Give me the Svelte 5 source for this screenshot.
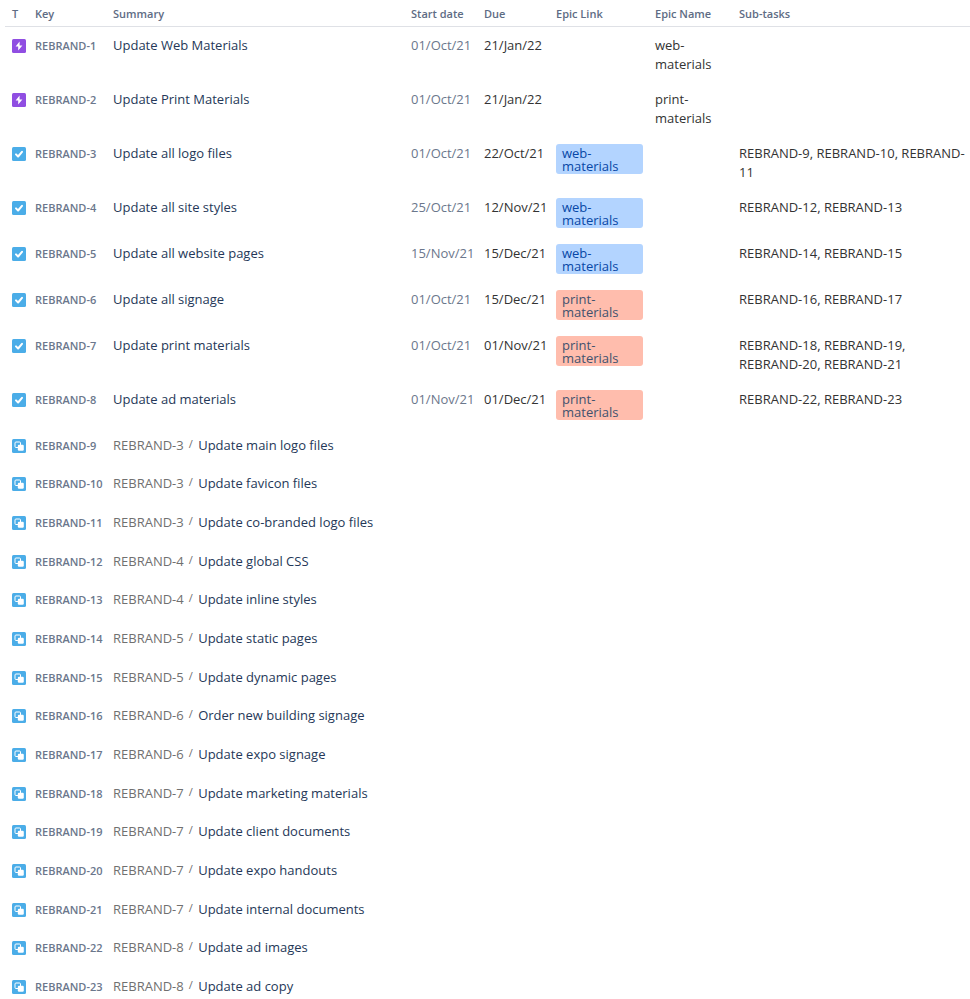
<script>
  const columns = [
    { id: "type", label: "T" },
    { id: "key", label: "Key" },
    { id: "summary", label: "Summary" },
    { id: "start", label: "Start date" },
    { id: "due", label: "Due" },
    { id: "epic-link", label: "Epic Link" },
    { id: "epic-name", label: "Epic Name" },
    { id: "subtasks", label: "Sub-tasks" },
  ];

  const issues = [
    { n: 1, type: "epic", summary: "Update Web Materials", start: "01/Oct/21", due: "21/Jan/22", epicName: "web-materials" },
    { n: 2, type: "epic", summary: "Update Print Materials", start: "01/Oct/21", due: "21/Jan/22", epicName: "print-materials" },
    { n: 3, type: "task", summary: "Update all logo files", start: "01/Oct/21", due: "22/Oct/21", epic: "web", subtasks: [9, 10, 11] },
    { n: 4, type: "task", summary: "Update all site styles", start: "25/Oct/21", due: "12/Nov/21", epic: "web", subtasks: [12, 13] },
    { n: 5, type: "task", summary: "Update all website pages", start: "15/Nov/21", due: "15/Dec/21", epic: "web", subtasks: [14, 15] },
    { n: 6, type: "task", summary: "Update all signage", start: "01/Oct/21", due: "15/Dec/21", epic: "print", subtasks: [16, 17] },
    { n: 7, type: "task", summary: "Update print materials", start: "01/Oct/21", due: "01/Nov/21", epic: "print", subtasks: [18, 19, 20, 21] },
    { n: 8, type: "task", summary: "Update ad materials", start: "01/Nov/21", due: "01/Dec/21", epic: "print", subtasks: [22, 23] },
    { n: 9, type: "subtask", parent: 3, summary: "Update main logo files" },
    { n: 10, type: "subtask", parent: 3, summary: "Update favicon files" },
    { n: 11, type: "subtask", parent: 3, summary: "Update co-branded logo files" },
    { n: 12, type: "subtask", parent: 4, summary: "Update global CSS" },
    { n: 13, type: "subtask", parent: 4, summary: "Update inline styles" },
    { n: 14, type: "subtask", parent: 5, summary: "Update static pages" },
    { n: 15, type: "subtask", parent: 5, summary: "Update dynamic pages" },
    { n: 16, type: "subtask", parent: 6, summary: "Order new building signage" },
    { n: 17, type: "subtask", parent: 6, summary: "Update expo signage" },
    { n: 18, type: "subtask", parent: 7, summary: "Update marketing materials" },
    { n: 19, type: "subtask", parent: 7, summary: "Update client documents" },
    { n: 20, type: "subtask", parent: 7, summary: "Update expo handouts" },
    { n: 21, type: "subtask", parent: 7, summary: "Update internal documents" },
    { n: 22, type: "subtask", parent: 8, summary: "Update ad images" },
    { n: 23, type: "subtask", parent: 8, summary: "Update ad copy" },
  ];

  const key = (n) => `REBRAND-${n}`;
</script>

<table class="issues">
  <colgroup>
    {#each columns as col}
      <col class="col-{col.id}" />
    {/each}
  </colgroup>
  <thead>
    <tr>
      {#each columns as col}
        <th scope="col">{col.label}</th>
      {/each}
    </tr>
  </thead>
  <tbody>
    {#each issues as issue (issue.n)}
      <tr class={issue.type}>
        <td>
          <svg class="icon" viewBox="0 0 16 16" role="img" aria-label={issue.type}>
            {#if issue.type === "epic"}
              <rect x="1" y="1" width="14" height="14" rx="1.5" fill="#904ee2" />
              <path d="M8.6 3.4 4.6 8.5H7.2V12.6L11.4 7.5H8.6Z" fill="#fff" />
            {:else if issue.type === "task"}
              <rect x="1" y="1" width="14" height="14" rx="1.5" fill="#4bade8" />
              <path d="M5 8.4 7.1 10.5 11 5.8" fill="none" stroke="#fff" stroke-width="2" stroke-linecap="round" stroke-linejoin="round" />
            {:else}
              <rect x="1" y="1" width="14" height="14" rx="1.5" fill="#4bade8" />
              <rect x="4" y="4" width="5.5" height="5.5" rx="1" fill="none" stroke="#fff" />
              <rect x="6.8" y="6.8" width="6" height="6" rx="1.2" fill="#fff" />
            {/if}
          </svg>
        </td>
        <td><a class="key" href="#{key(issue.n)}">{key(issue.n)}</a></td>
        <td>
          {#if issue.parent}
            <a class="parent" href="#{key(issue.parent)}">{key(issue.parent)}</a><span class="slash">/</span>
          {/if}
          <a class="summary" href="#{key(issue.n)}">{issue.summary}</a>
        </td>
        <td class="start">{issue.start ?? ""}</td>
        <td class="due">{issue.due ?? ""}</td>
        <td>
          {#if issue.epic}
            <a class="epic-label {issue.epic}" href="#{issue.epic}">{issue.epic}-materials</a>
          {/if}
        </td>
        <td>{issue.epicName ?? ""}</td>
        <td>{(issue.subtasks ?? []).map(key).join(", ")}</td>
      </tr>
    {/each}
  </tbody>
</table>

<style>
  :global(body) {
    margin: 0;
    background: #fff;
    overflow-x: hidden;
  }
  :global(#app) {
    padding-left: 5px;
  }
  .issues {
    width: 100%;
    table-layout: fixed;
    border-collapse: collapse;
    font-family: "Segoe UI", "Open Sans", "Noto Sans", sans-serif;
    font-size: 13px;
    line-height: 19px;
    color: #333;
  }
  .col-type {
    width: 26px;
  }
  .col-key {
    width: 78px;
  }
  .col-start {
    width: 73px;
  }
  .col-due {
    width: 72px;
  }
  .col-epic-link {
    width: 99px;
  }
  .col-epic-name {
    width: 84px;
  }
  .col-subtasks {
    width: 235px;
  }
  th {
    padding: 4px 0 3px 4px;
    border-bottom: 1px solid #dfe1e6;
    font-size: 11px;
    font-weight: 600;
    text-align: left;
    white-space: nowrap;
    color: #5e6c84;
  }
  td {
    padding: 9px 0 7px 4px;
    vertical-align: top;
  }
  th:first-child {
    padding-left: 7px;
  }
  td:first-child {
    padding-left: 6px;
  }
  .subtask td {
    height: 23px;
  }
  .subtask:nth-child(3n) td {
    height: 22px;
  }
  a {
    text-decoration: none;
  }
  .icon {
    display: block;
    width: 16px;
    height: 16px;
    margin-top: 2px;
  }
  .key {
    font-size: 11px;
    font-weight: 600;
    white-space: nowrap;
    color: #6b778c;
  }
  .summary {
    color: #253858;
  }
  .parent {
    color: #707070;
  }
  .slash {
    margin: 0 2px 0 5px;
    font-size: 11px;
    line-height: 11px;
    vertical-align: 2px;
    color: #707070;
  }
  .start {
    white-space: nowrap;
    color: #6b778c;
  }
  .due {
    white-space: nowrap;
  }
  .epic-label {
    display: block;
    box-sizing: border-box;
    width: 87px;
    padding: 3px 6px 1px;
    border-radius: 3px;
    line-height: 13px;
  }
  .web {
    background: #b3d4ff;
    color: #0747a6;
  }
  .print {
    background: #ffbdad;
    color: #42526e;
  }
</style>
